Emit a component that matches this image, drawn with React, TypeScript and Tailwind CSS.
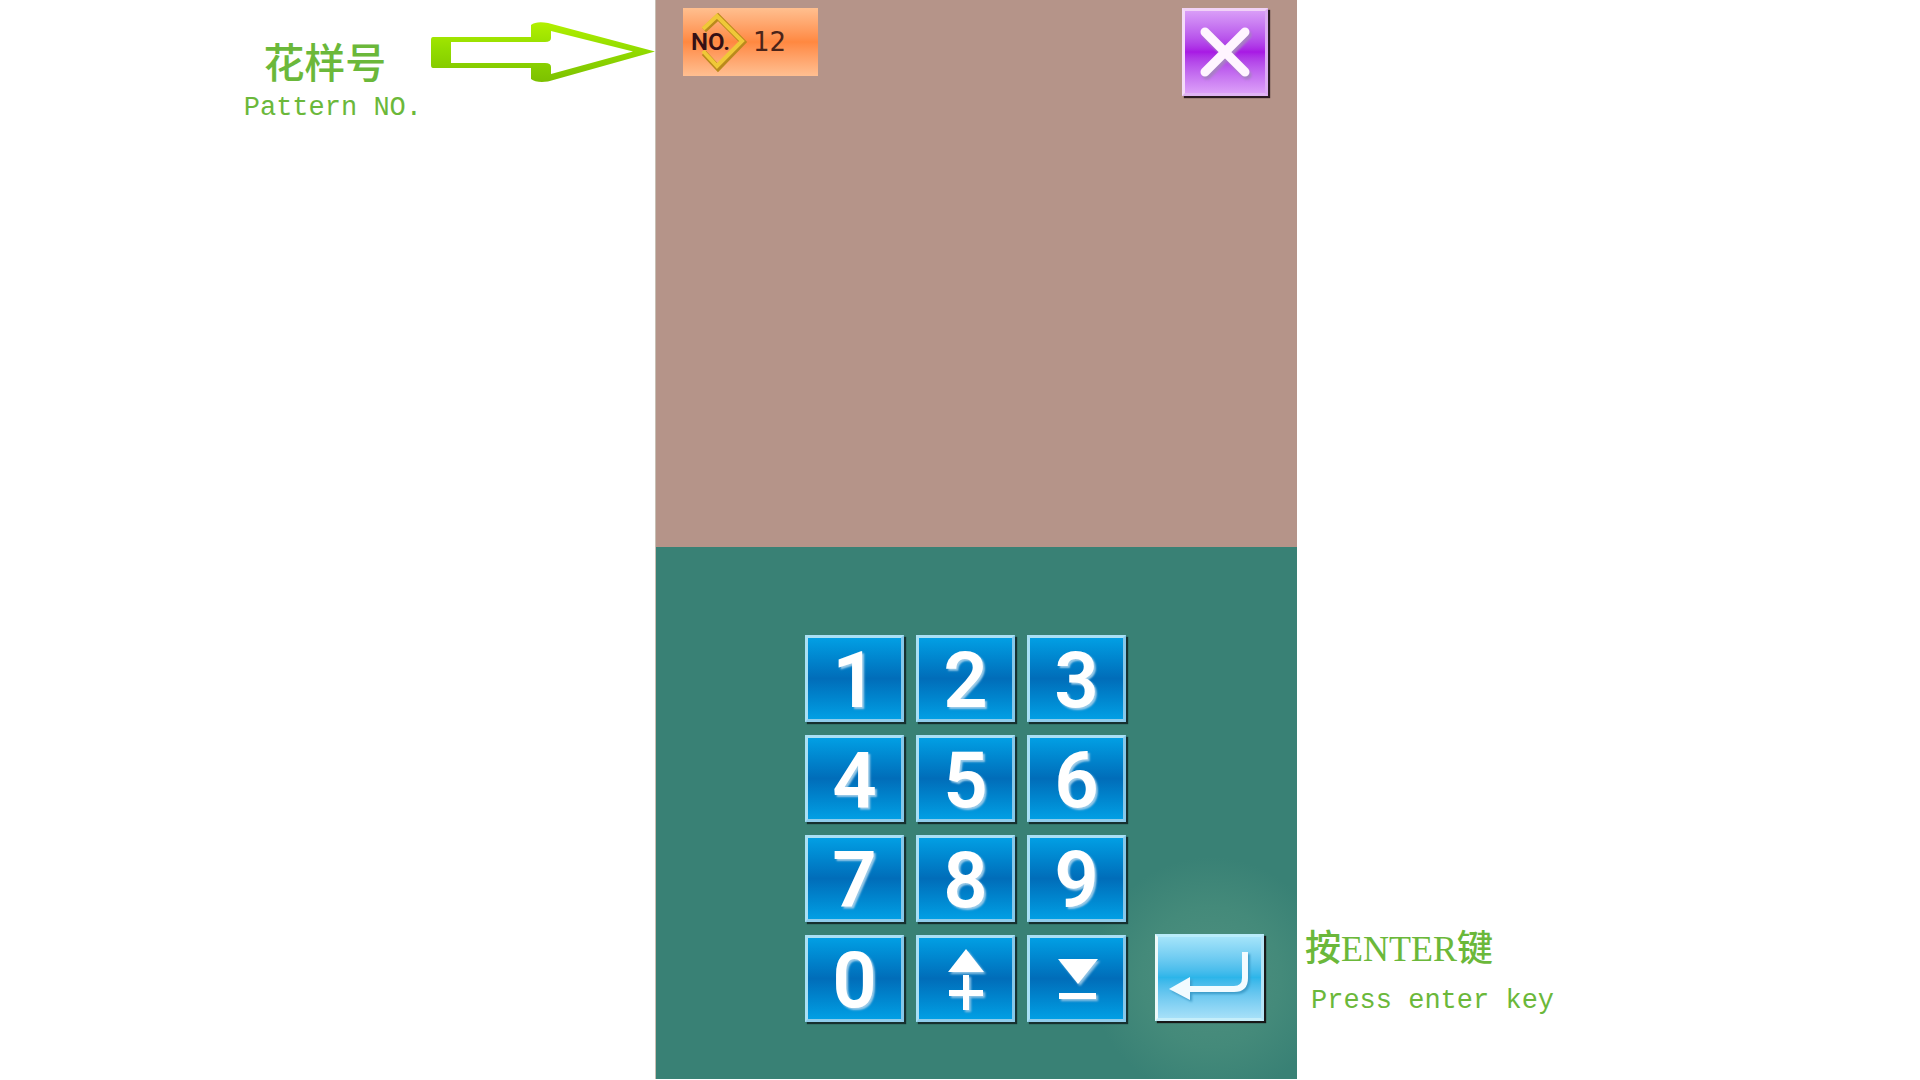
import type { ReactNode } from 'react';

const keyFace =
  'flex h-[87px] w-[99px] items-center justify-center border-[3px] border-t-[#a9e0f5] border-l-[#a9e0f5] border-r-[#85c8ea] border-b-[#8fcdec] bg-linear-to-b from-[#029fe4] via-[#016db9] to-[#029fe4] shadow-[2px_2px_1px_#17302f] font-["Roboto","Liberation_Sans",sans-serif] text-[78px] leading-none font-semibold text-white [text-shadow:2px_2px_2px_#9ccbe8]';

function Key({ label, children }: { label: string; children: ReactNode }) {
  return (
    <button type="button" aria-label={label} className={keyFace}>
      {children}
    </button>
  );
}

function PointerArrow() {
  return (
    <svg viewBox="0 0 225 62" className="h-[62px] w-[225px] shrink-0" aria-hidden="true">
      <defs>
        <linearGradient id="lime" x1="0" y1="0" x2="0" y2="1">
          <stop offset="0" stopColor="#b2f000" />
          <stop offset="0.45" stopColor="#93dc00" />
          <stop offset="1" stopColor="#7cc000" />
        </linearGradient>
      </defs>
      <path
        fill="url(#lime)"
        fillRule="evenodd"
        d="M3 17H101V5Q106 1 118 3L225 31.500L118 61.500Q106 63 101 59V48H3Q1 48 1 45V20Q1 17 3 17ZM21 22V43H115Q121 43 121 47V54L203 31.500L121 11V18Q121 22 115 22Z"
      />
    </svg>
  );
}

function UpPlus() {
  return (
    <svg viewBox="0 0 93 81" className="h-[81px] w-[93px] drop-shadow-[2px_2px_1px_#8fc3e4]" fill="#fff" aria-hidden="true">
      <path d="M47 11L65 34H29Z" />
      <path d="M44 37H50V52H64V58H50V72H44V58H30V52H44Z" />
    </svg>
  );
}

function DownMinus() {
  return (
    <svg viewBox="0 0 93 81" className="h-[81px] w-[93px] drop-shadow-[2px_2px_1px_#8fc3e4]" fill="#fff" aria-hidden="true">
      <path d="M28 21H68L48 46Z" />
      <path d="M29 55H66V61H29Z" />
    </svg>
  );
}

export default function App() {
  return (
    <main className="grid min-h-screen grid-cols-[655fr_642fr_623fr] bg-white text-[#6bb83a]">
      <section className="flex items-start justify-end gap-2 pt-5">
        <div className="flex flex-col items-center pt-3 whitespace-nowrap">
          <p lang="zh" className="pr-4 font-['Noto_Sans_CJK_SC',sans-serif] text-[41px] leading-[56px] font-medium">
            花样号
          </p>
          <p className="font-['Liberation_Mono',monospace] text-[27px] leading-[40px]">Pattern NO.</p>
        </div>
        <PointerArrow />
      </section>

      <section className="mb-px flex flex-col border-l border-[#c8bfb4]">
        <header className="flex h-[547px] items-start justify-between bg-[#b59489] pt-2 pr-[29px] pl-[27px]">
          <div className="flex h-[68px] w-[135px] items-center bg-linear-to-b from-[#ffbf8f] via-[#ff8840] to-[#ffbf91]">
            <div className="grid grid-cols-[66px] items-center">
              <svg viewBox="0 0 66 68" className="col-start-1 row-start-1 h-[68px] w-[66px]" fill="none" aria-hidden="true">
                <path d="M21 22L35 9L60 34L35 60L21 45" stroke="#b98a1c" strokeWidth="6" />
                <path d="M20 21L34 8L59 33L34 58L20 43" stroke="#f0c838" strokeWidth="4" />
              </svg>
              <span className="z-10 col-start-1 row-start-1 pl-2 font-['Roboto',sans-serif] text-[24px] leading-none font-semibold text-[#351015]">
                NO.
              </span>
            </div>
            <output className="pl-1 font-['DejaVu_Sans',sans-serif] text-[26px] leading-none text-[#4b2419]">12</output>
          </div>
          <button
            type="button"
            aria-label="Close"
            className="flex h-[88px] w-[86px] items-center justify-center border-[3px] border-t-[#f1d2f7] border-r-[#dcaaf3] border-b-[#e0b4f4] border-l-[#f4dcf8] bg-linear-to-b from-[#d99df7] via-[#a818e4] to-[#dc9ff8] shadow-[2px_2px_1px_#2b1a22]"
          >
            <svg viewBox="0 0 80 82" className="h-[82px] w-[80px] drop-shadow-[2px_3px_1px_#a77fc4]" fill="none" stroke="#fff5ff" strokeWidth="9" strokeLinecap="round" aria-hidden="true">
              <path d="M20 21L60 61M60 21L20 61" />
            </svg>
          </button>
        </header>

        <div className="flex flex-1 items-start bg-[#398175] bg-[radial-gradient(circle_at_555px_430px,#4f9080_0,#448a7a_70px,#398175_120px)] pt-[88px] pl-[149px]">
          <div className="grid grid-cols-[repeat(3,99px)] gap-x-3 gap-y-[13px]">
            {['1', '2', '3', '4', '5', '6', '7', '8', '9', '0'].map((n) => (
              <Key key={n} label={n}>
                <span className="pt-1">{n}</span>
              </Key>
            ))}
            <Key label="Increase">
              <UpPlus />
            </Key>
            <Key label="Decrease">
              <DownMinus />
            </Key>
          </div>
          <button
            type="button"
            aria-label="Enter"
            className="mt-[299px] ml-[29px] flex h-[87px] w-[109px] items-center justify-center border-[3px] border-t-[#b9ecfb] border-r-[#b5e4f6] border-b-[#c5eefa] border-l-[#eefafa] bg-linear-to-b from-[#a4e4fa] via-[#2cb5e9] to-[#a6e0f8] shadow-[2px_2px_1px_#181818]"
          >
            <svg viewBox="0 0 103 81" className="h-[81px] w-[103px] drop-shadow-[2px_2px_1px_#3d9cc9]" aria-hidden="true">
              <path d="M28 52H76Q87 52 87 41V15" fill="none" stroke="#f2fbff" strokeWidth="6" />
              <path d="M11 52L32 40V63Z" fill="#f2fbff" />
            </svg>
          </button>
        </div>
      </section>

      <section className="flex flex-col justify-end pb-[61px] pl-2 whitespace-nowrap">
        <p lang="zh" className="font-['Liberation_Serif','Noto_Sans_CJK_SC',serif] text-[36px] leading-[52px] font-medium">
          按ENTER键
        </p>
        <p className="pt-2 pl-1.5 font-['Liberation_Mono',monospace] text-[27px] leading-[36px]">Press enter key</p>
      </section>
    </main>
  );
}
